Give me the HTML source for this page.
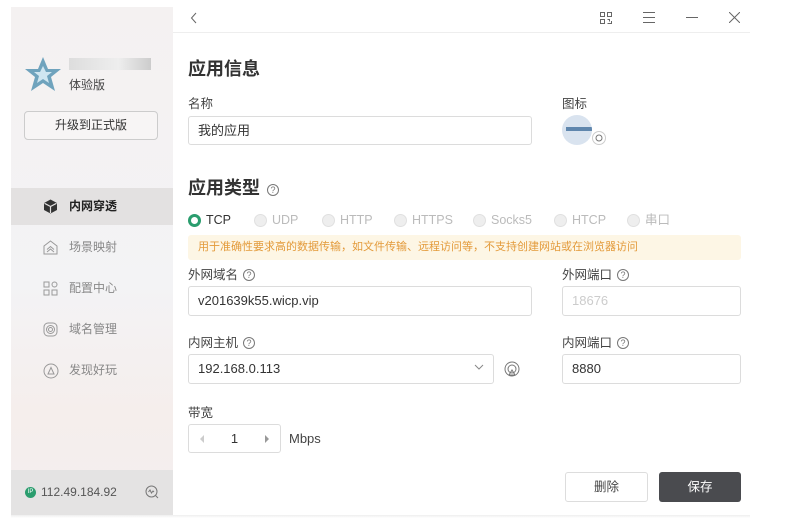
<!DOCTYPE html>
<html><head><meta charset="utf-8"><style>
*{box-sizing:border-box;margin:0;padding:0}
body{width:789px;height:522px;background:#fff;position:relative;overflow:hidden;font-family:"Liberation Sans","Noto Sans CJK SC",sans-serif;color:#333;font-size:13px}
.a{position:absolute}
.side{left:11px;top:7px;width:162px;height:508px;background:linear-gradient(#f4f1f1,#f3f3f5 55%,#f5eeec 80%,#f3efef)}
.nav{left:11px;width:162px;height:37px;font-size:12px;color:#888;line-height:37px;padding-left:58px}
.nav svg{position:absolute;left:32px;top:11px}
.inp{border:1px solid #dcdcdc;border-radius:3px;height:30px;line-height:28px;padding-left:9px;font-size:13px;color:#333;background:#fff}
.lbl{font-size:12.5px;color:#444}
.q{display:inline-block;width:12px;height:12px;border:1px solid #777;border-radius:50%;font-size:9px;line-height:10px;text-align:center;color:#777;margin-left:5px;vertical-align:1px}
.rad{font-size:12.5px;color:#bbb;top:212px;height:16px;line-height:16px;display:flex;align-items:center}
.rad i{display:inline-block;width:13px;height:13px;border-radius:50%;background:#eee;border:1px solid #e0e0e0;margin-right:5px}
</style></head><body>
<div class="a side"></div>
<div class="a" style="left:11px;top:470px;width:162px;height:45px;background:#e4e3e3"></div>
<svg class="a" style="left:24px;top:56px" width="38" height="36" viewBox="0 0 38 36"><path d="M19 1 L24 13 L37 13 L27 21 L31 35 L19 27 L7 35 L11 21 L1 13 L14 13Z" fill="#6fa3bd"/><path d="M19 10 L22 16 L28 16 L23 20 L25 27 L19 23 L13 27 L15 20 L10 16 L16 16Z" fill="#cfe6f1"/></svg>
<div class="a" style="left:69px;top:58px;width:82px;height:12px;background:linear-gradient(90deg,#ddd,#eee 60%,#ccc)"></div>
<div class="a" style="left:69px;top:76px;font-size:12px;color:#444">体验版</div>
<div class="a" style="left:24px;top:111px;width:134px;height:29px;border:1px solid #ccc;border-radius:4px;background:#f7f5f5;text-align:center;line-height:27px;font-size:12px;color:#333">升级到正式版</div>
<div class="a nav" style="top:188px;background:#e3e1e1;color:#222;font-weight:bold"><svg width="15" height="15" viewBox="0 0 15 15"><path d="M7.5 0.5L14 4v7l-6.5 3.5L1 11V4z" fill="#333"/><path d="M1.5 4.3L7.5 7.5 13.5 4.3M7.5 7.5V14" stroke="#e3e1e1" stroke-width="1.2" fill="none"/></svg>内网穿透</div>
<div class="a nav" style="top:229px"><svg width="15" height="15" viewBox="0 0 15 15" fill="none" stroke="#999"><path d="M7.5 1L14 6v8H1V6z"/><path d="M4 12l3.5-3 3.5 3M4 9.5l3.5-3 3.5 3"/></svg>场景映射</div>
<div class="a nav" style="top:270px"><svg width="15" height="15" viewBox="0 0 15 15" fill="none" stroke="#999"><rect x="1" y="1" width="5" height="5"/><circle cx="11.5" cy="3.5" r="2.5"/><rect x="1" y="9" width="5" height="5"/><rect x="9" y="9" width="5" height="5"/></svg>配置中心</div>
<div class="a nav" style="top:311px"><svg width="15" height="15" viewBox="0 0 15 15" fill="none" stroke="#999"><rect x="1" y="1" width="13" height="13" rx="4"/><circle cx="7.5" cy="7.5" r="4"/><circle cx="7.5" cy="7.5" r="2"/></svg>域名管理</div>
<div class="a nav" style="top:352px"><svg width="16" height="16" viewBox="0 0 16 16" fill="none" stroke="#999"><circle cx="8" cy="8" r="7"/><path d="M5 11L8 4.5 11 11z"/></svg>发现好玩</div>
<div class="a" style="left:25px;top:487px;width:11px;height:11px;border-radius:50%;background:#2a9d6e;color:#fff;font-size:6px;line-height:11px;text-align:center">IP</div>
<div class="a" style="left:41px;top:485px;font-size:12px;color:#555">112.49.184.92</div>
<svg class="a" style="left:145px;top:485px" width="14" height="14" viewBox="0 0 14 14" fill="none" stroke="#777"><circle cx="6.5" cy="6.5" r="5.5"/><path d="M3.5 7l1.5-2 1.5 3 1.5-2 1 1M10.5 10.5L13 13"/></svg>
<div class="a" style="left:173px;top:32px;width:577px;height:1px;background:#eee"></div>
<svg class="a" style="left:190px;top:12px" width="8" height="12" viewBox="0 0 8 12"><path d="M6 1L1.5 6 6 11" stroke="#666" fill="none"/></svg>
<svg class="a" style="left:600px;top:12px" width="12" height="12" viewBox="0 0 12 12" fill="none" stroke="#666"><rect x="0.5" y="0.5" width="4" height="4"/><rect x="7.5" y="0.5" width="4" height="4"/><rect x="0.5" y="7.5" width="4" height="4"/><path d="M7.5 7.5h2v2M11.5 9v2.5h-4"/></svg>
<svg class="a" style="left:643px;top:12px" width="12" height="11" viewBox="0 0 12 11" stroke="#666"><path d="M0 .5h12M0 5.5h12M0 10.5h12"/></svg>
<div class="a" style="left:686px;top:17px;width:12px;height:1px;background:#666"></div>
<svg class="a" style="left:729px;top:12px" width="11" height="11" viewBox="0 0 11 11" stroke="#666"><path d="M0 0L11 11M11 0L0 11"/></svg>
<div class="a" style="left:188px;top:55px;font-size:18px;font-weight:bold;color:#333">应用信息</div>
<div class="a lbl" style="left:188px;top:93px">名称</div>
<div class="a inp" style="left:188px;top:116px;width:344px;height:29px">我的应用</div>
<div class="a lbl" style="left:562px;top:93px">图标</div>
<div class="a" style="left:562px;top:115px;width:30px;height:30px;border-radius:50%;background:#d9e3ef;overflow:hidden"><div style="position:absolute;left:4px;top:12px;width:26px;height:4px;background:#5f86ad"></div></div>
<div class="a" style="left:592px;top:131px;width:14px;height:14px;border-radius:50%;background:#fff;border:1px solid #ccc"></div>
<svg class="a" style="left:595px;top:134px" width="8" height="8" viewBox="0 0 8 8" fill="none" stroke="#777"><circle cx="4" cy="4" r="3"/></svg>
<div class="a" style="left:188px;top:174px;font-size:18px;font-weight:bold;color:#333">应用类型<span class="q" style="font-weight:normal;margin-left:7px">?</span></div>
<div class="a rad" style="left:188px;color:#333"><i style="background:#fff;border:3px solid #2a9d6e"></i>TCP</div>
<div class="a rad" style="left:254px"><i></i>UDP</div>
<div class="a rad" style="left:322px"><i></i>HTTP</div>
<div class="a rad" style="left:394px"><i></i>HTTPS</div>
<div class="a rad" style="left:473px"><i></i>Socks5</div>
<div class="a rad" style="left:554px"><i></i>HTCP</div>
<div class="a rad" style="left:627px"><i></i>串口</div>
<div class="a" style="left:188px;top:235px;width:553px;height:25px;background:#fdf6e5;border-radius:3px;color:#e39a3a;font-size:11px;line-height:25px;padding-left:10px">用于准确性要求高的数据传输，如文件传输、远程访问等，不支持创建网站或在浏览器访问</div>
<div class="a lbl" style="left:188px;top:264px">外网域名<span class="q">?</span></div>
<div class="a inp" style="left:188px;top:286px;width:344px">v201639k55.wicp.vip</div>
<div class="a lbl" style="left:562px;top:264px">外网端口<span class="q">?</span></div>
<div class="a inp" style="left:562px;top:286px;width:179px;color:#ccc">18676</div>
<div class="a lbl" style="left:188px;top:332px">内网主机<span class="q">?</span></div>
<div class="a inp" style="left:188px;top:354px;width:306px">192.168.0.113</div>
<svg class="a" style="left:474px;top:364px" width="10" height="6" viewBox="0 0 10 6"><path d="M1 1l4 4 4-4" stroke="#888" fill="none"/></svg>
<svg class="a" style="left:504px;top:361px" width="16" height="16" viewBox="0 0 16 16" fill="none" stroke="#777"><circle cx="8" cy="8" r="7"/><circle cx="8" cy="8" r="4"/><path d="M5 14l3-5 3 5z"/></svg>
<div class="a lbl" style="left:562px;top:332px">内网端口<span class="q">?</span></div>
<div class="a inp" style="left:562px;top:354px;width:179px">8880</div>
<div class="a lbl" style="left:188px;top:402px">带宽</div>
<div class="a inp" style="left:188px;top:424px;width:93px;height:29px;text-align:center;padding:0">1</div>
<div class="a" style="left:200px;top:435px;width:0;height:0;border:4px solid transparent;border-right-color:#ccc;border-left:0"></div>
<div class="a" style="left:265px;top:435px;width:0;height:0;border:4px solid transparent;border-left-color:#999;border-right:0"></div>
<div class="a" style="left:289px;top:431px;font-size:13px;color:#444">Mbps</div>
<div class="a" style="left:565px;top:472px;width:83px;height:30px;border:1px solid #ddd;border-radius:3px;text-align:center;line-height:28px;font-size:12.5px;color:#444">删除</div>
<div class="a" style="left:659px;top:472px;width:82px;height:30px;background:#4a4b4f;border-radius:3px;text-align:center;line-height:30px;font-size:12.5px;color:#fff">保存</div>
<div class="a" style="left:11px;top:515px;width:739px;height:3px;background:linear-gradient(#eee,#fff)"></div>
</body></html>
